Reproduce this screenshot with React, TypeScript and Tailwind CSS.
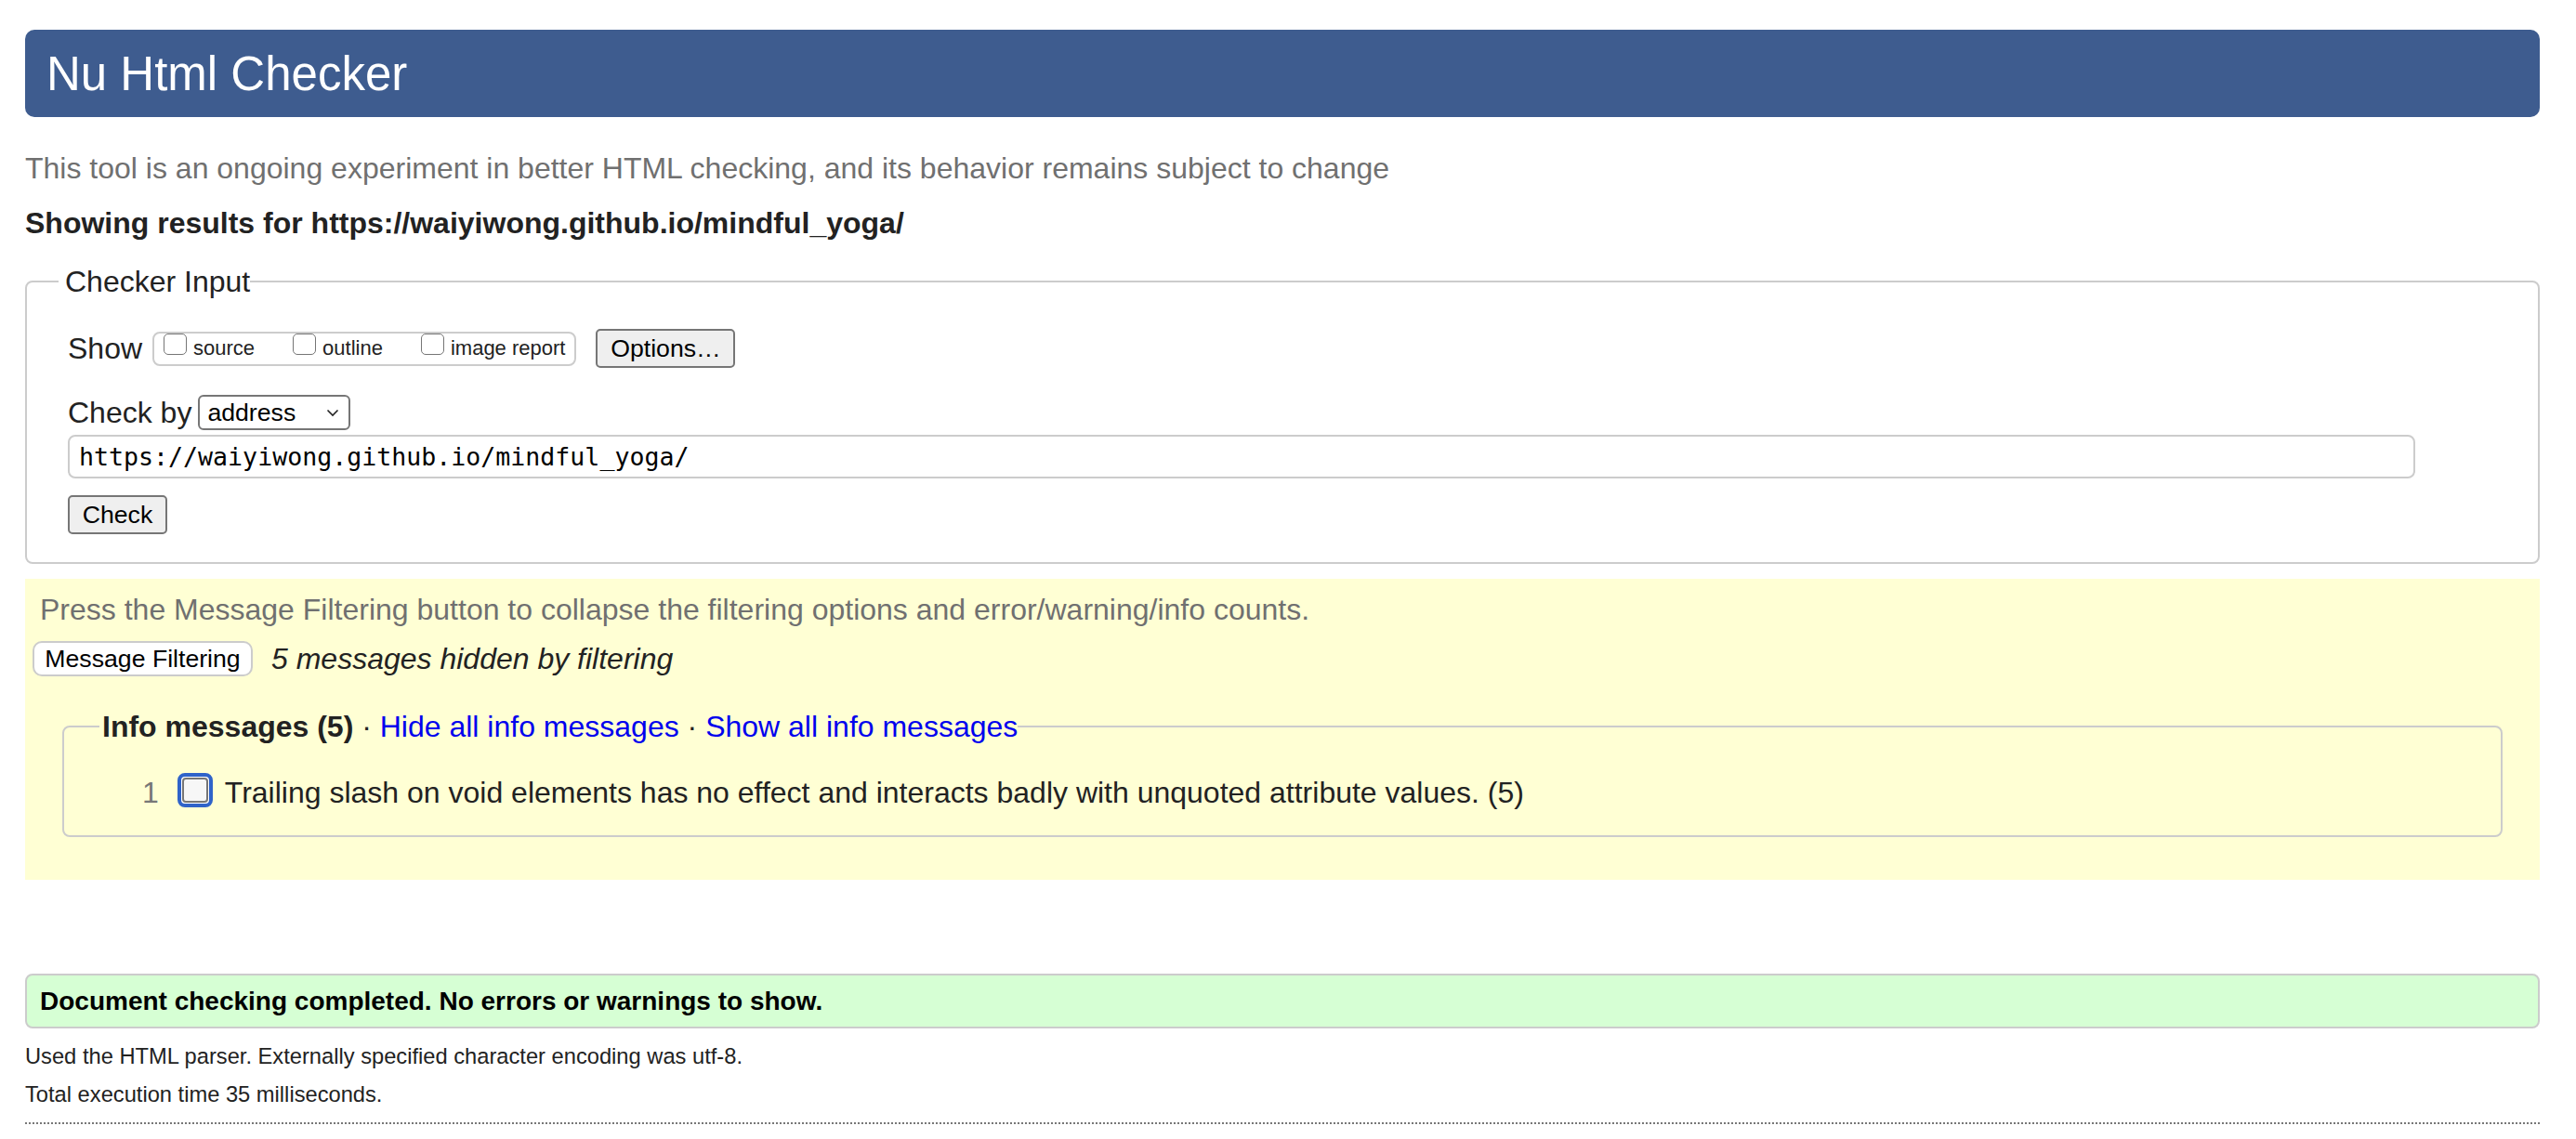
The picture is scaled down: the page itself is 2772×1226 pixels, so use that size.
const font = { fontFamily: '"Liberation Sans", Arial, Helvetica, sans-serif' };

function ShowBox() {
  return <span className="block w-[25px] h-[23px] rounded-[5px] border-[1.5px] border-[#767676] bg-white shrink-0" />;
}

function ShowOption({ label }: { label: string }) {
  return (
    <div className="flex items-start">
      <ShowBox />
      <span className="ml-[7px] mt-[4px] text-[22px] leading-[24px] whitespace-nowrap">{label}</span>
    </div>
  );
}

export default function App() {
  return (
    <div className="min-h-screen bg-white text-[#222] pl-[27px] pr-[39px] pt-[32px] pb-[20px]" style={font}>
      {/* header */}
      <div className="h-[94px] bg-[#3e5c8f] rounded-[10px] flex items-center pl-[23px]">
        <h1 className="text-white text-[51px] leading-none font-normal">Nu Html Checker</h1>
      </div>

      <p className="mt-[37px] text-[32px] leading-[36px] text-[#707070]">
        This tool is an ongoing experiment in better HTML checking, and its behavior remains subject to change
      </p>

      <p className="mt-[23px] text-[32px] leading-[36px] font-bold">
        Showing results for https://waiyiwong.github.io/mindful_yoga/
      </p>

      {/* checker input */}
      <fieldset className="mt-[27px] border-2 border-[#ccc] rounded-[8px] pt-[33px] pb-[30px]">
        <legend className="ml-[34px] pl-[7px] text-[32px] leading-[36px]">Checker Input</legend>
        <div className="pl-[44px]">
          <div className="flex items-center h-[42px]">
            <span className="text-[32px] leading-[36px]">Show</span>
            <div className="ml-[11px] h-[37px] border-2 border-[#ccc] rounded-[8px] pl-[10px] pr-[10px] flex items-start gap-[41px]">
              <ShowOption label="source" />
              <ShowOption label="outline" />
              <ShowOption label="image report" />
            </div>
            <button className="ml-[21px] h-[42px] w-[150px] bg-[#efefef] border-2 border-[#767676] rounded-[5px] text-[26.67px] leading-none text-black">
              Options…
            </button>
          </div>

          <div className="mt-[27px] flex items-center h-[42px]">
            <span className="text-[32px] leading-[36px]">Check by</span>
            <div className="ml-[7px] h-[38px] w-[164px] border-2 border-[#767676] rounded-[6px] bg-white flex items-center pl-[8px] pr-[10px] justify-between">
              <span className="text-[26.67px] leading-none text-black">address</span>
              <svg width="14" height="9" viewBox="0 0 14 9" fill="none">
                <path d="M1.5 1.5l5.5 5.5 5.5-5.5" stroke="#222" strokeWidth="1.6" />
              </svg>
            </div>
          </div>

          <input
            readOnly
            value="https://waiyiwong.github.io/mindful_yoga/"
            className="mt-[3px] block w-[2526px] h-[47px] border-2 border-[#ccc] rounded-[8px] pl-[10px] text-[26.6px] text-black outline-none"
            style={{ fontFamily: '"DejaVu Sans Mono", "Liberation Mono", monospace' }}
          />

          <button className="mt-[18px] block h-[42px] w-[107px] bg-[#efefef] border-2 border-[#767676] rounded-[5px] text-[26.67px] leading-none text-black">
            Check
          </button>
        </div>
      </fieldset>

      {/* filtering results */}
      <div className="mt-[16px] bg-[#ffffd4] pt-[15px] pb-[46px]">
        <p className="ml-[16px] text-[32px] leading-[36px] text-[#707070]">
          Press the Message Filtering button to collapse the filtering options and error/warning/info counts.
        </p>
        <div className="mt-[16px] ml-[8px] flex items-center">
          <button className="h-[38px] w-[237px] bg-white border-2 border-[#ccc] rounded-[10px] text-[26.67px] leading-none text-black">
            Message Filtering
          </button>
          <span className="ml-[20px] text-[32px] leading-[36px] italic">5 messages hidden by filtering</span>
        </div>

        <fieldset className="mt-[36px] mx-[40px] border-2 border-[#ccc] rounded-[8px] pt-[30px] pb-[29px]">
          <legend className="ml-[38px] pl-[3px] text-[32px] leading-[36px]">
            <strong>Info messages (5)</strong> · <a className="text-[#0000ee]">Hide all info messages</a> ·{" "}
            <a className="text-[#0000ee]">Show all info messages</a>
          </legend>
          <div className="pl-[84px] flex items-center h-[40px]">
            <span className="text-[32px] leading-[36px] text-[#777] mt-[6px]">1</span>
            <span className="ml-[20px] w-[38px] h-[37px] rounded-[8px] border-[4px] border-[#2f63c9] bg-white p-[1px] shrink-0">
              <span className="block w-full h-full rounded-[4px] border-2 border-[#767676] bg-[#f7f7f7]" />
            </span>
            <span className="ml-[13px] mt-[6px] text-[32px] leading-[36px]">
              Trailing slash on void elements has no effect and interacts badly with unquoted attribute values. (5)
            </span>
          </div>
        </fieldset>
      </div>

      {/* result */}
      <div className="mt-[101px] h-[59px] bg-[#d6ffd4] border-2 border-[#ccc] rounded-[8px] flex items-center pl-[14px]">
        <span className="text-[28px] leading-none font-bold text-black">
          Document checking completed. No errors or warnings to show.
        </span>
      </div>

      <p className="mt-[16px] text-[23.7px] leading-[28px]">
        Used the HTML parser. Externally specified character encoding was utf-8.
      </p>
      <p className="mt-[13px] text-[23.7px] leading-[28px]">Total execution time 35 milliseconds.</p>
      <div className="mt-[16px] border-t-2 border-dotted border-[#777]" />
    </div>
  );
}
